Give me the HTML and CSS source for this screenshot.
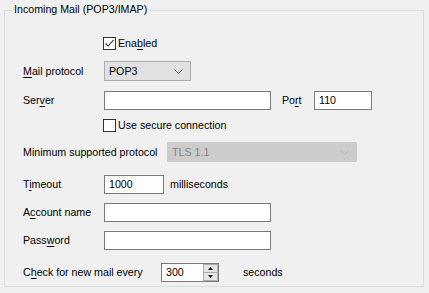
FILE: index.html
```html
<!DOCTYPE html>
<html lang="en">
  <head>
    <meta charset="utf-8" />
    <title>Incoming Mail</title>
    <link rel="stylesheet" href="styles.css">
  </head>
  <body>
    <div class="group">
      <div class="title">Incoming Mail (POP3/IMAP)</div>

      <div class="row r-enabled">
        <span class="indent"></span>
        <span class="check">
          <svg width="13" height="13" viewBox="0 0 13 13"><polyline points="2.5,6.5 5,9 10.5,3" fill="none" stroke="#222" stroke-width="1.1" /></svg>
        </span>
        <span class="check-label">Ena<u>b</u>led</span>
      </div>

      <div class="row r-protocol">
        <label class="lbl"><u>M</u>ail protocol</label>
        <div class="combo w-protocol">
          <span>POP3</span>
          <svg width="9" height="5" viewBox="0 0 9 5"><polyline points="0.5,0.5 4.5,4.5 8.5,0.5" fill="none" stroke="#6d6d6d" /></svg>
        </div>
      </div>

      <div class="row r-server">
        <label class="lbl">Ser<u>v</u>er</label>
        <div class="field w-long"></div>
        <label class="lbl-port">Po<u>r</u>t</label>
        <div class="field w-port">110</div>
      </div>

      <div class="row r-secure">
        <span class="indent"></span>
        <span class="check"></span>
        <span class="check-label">Use secure connection</span>
      </div>

      <div class="row r-min">
        <label class="lbl lbl-min">Minimum supported protocol</label>
        <div class="combo disabled w-min">
          <span>TLS 1.1</span>
          <svg width="9" height="5" viewBox="0 0 9 5"><polyline points="0.5,0.5 4.5,4.5 8.5,0.5" fill="none" stroke="#b4b4b4" /></svg>
        </div>
      </div>

      <div class="row r-timeout">
        <label class="lbl">T<u>i</u>meout</label>
        <div class="field w-timeout">1000</div>
        <span class="unit">milliseconds</span>
      </div>

      <div class="row r-account">
        <label class="lbl">A<u>c</u>count name</label>
        <div class="field w-long"></div>
      </div>

      <div class="row r-password">
        <label class="lbl">Pass<u>w</u>ord</label>
        <div class="field w-long"></div>
      </div>

      <div class="row r-check">
        <label class="lbl lbl-check">C<u>h</u>eck for new mail every</label>
        <div class="spin">
          <span class="spin-value">300</span>
          <span class="spin-btns">
            <span class="spin-btn"><svg width="5" height="3" viewBox="0 0 5 3"><polygon points="2.5,0 5,3 0,3" fill="#111" /></svg></span>
            <span class="spin-btn"><svg width="5" height="3" viewBox="0 0 5 3"><polygon points="0,0 5,0 2.5,3" fill="#111" /></svg></span>
          </span>
        </div>
        <span class="unit unit-sec">seconds</span>
      </div>
    </div>
  </body>
</html>
```

FILE: styles.css
```css
body {
  margin: 0;
  background: #f0f0f0;
  font-family: "Liberation Sans", Arial, sans-serif;
  font-size: 10.67px;
  color: #000;
}
u {
  text-decoration-thickness: 1px;
  text-underline-offset: 2px;
}

.group {
  box-sizing: border-box;
  width: 420px;
  height: 277px;
  margin: 10px 0 0 4px;
  border: 1px solid #dcdcdc;
  padding-left: 18px;
}
.title {
  display: inline-block;
  height: 16px;
  line-height: 16px;
  margin: -10px 0 0 -11px;
  padding: 0 2px;
  background: #f0f0f0;
  vertical-align: top;
}

.row {
  display: flex;
  align-items: center;
  height: 20px;
}
.r-enabled { margin-top: 10px; }
.r-protocol { margin-top: 8px; }
.r-server { margin-top: 9px; }
.r-secure { margin-top: 5px; }
.r-min { margin-top: 7px; }
.r-timeout { margin-top: 12px; }
.r-account { margin-top: 8px; }
.r-password { margin-top: 8px; }
.r-check { margin-top: 12px; }

.lbl { width: 81px; flex: none; }
.lbl-min { width: 144px; }
.lbl-check { width: 138px; }
.lbl-port { width: 32px; margin-left: 11px; }
.indent { width: 80px; flex: none; }

.check {
  box-sizing: border-box;
  width: 13px;
  height: 13px;
  border: 1px solid #333;
  background: #fff;
  display: flex;
  align-items: center;
  justify-content: center;
}
.check svg { margin: -1px; }
.check-label { margin-left: 2px; }

.field {
  box-sizing: border-box;
  height: 19px;
  border: 1px solid #7a7a7a;
  background: #fff;
  padding: 0 4px;
  line-height: 17px;
}
.w-long { width: 167px; }
.w-port { width: 58px; }
.w-timeout { width: 60px; }

.combo {
  box-sizing: border-box;
  height: 20px;
  border: 1px solid #adadad;
  background: #e1e1e1;
  display: flex;
  align-items: center;
  justify-content: space-between;
  padding: 0 7px 0 4px;
}
.w-protocol { width: 87px; }
.w-min { width: 190px; }
.combo.disabled {
  background: #cccccc;
  border-color: #cccccc;
  color: #838383;
}

.unit { margin-left: 6px; }
.unit-sec { margin-left: 24px; }

.spin {
  box-sizing: border-box;
  width: 58px;
  height: 19px;
  border: 1px solid #7a7a7a;
  background: #fff;
  display: flex;
  align-items: stretch;
}
.spin-value {
  flex: 1;
  padding-left: 4px;
  line-height: 17px;
}
.spin-btns {
  width: 15px;
  display: flex;
  flex-direction: column;
}
.spin-btn {
  flex: 1;
  box-sizing: border-box;
  border: 1px solid #adadad;
  background: #e5e5e5;
  display: flex;
  align-items: center;
  justify-content: center;
}
.spin-btn + .spin-btn { border-top: none; }
```
